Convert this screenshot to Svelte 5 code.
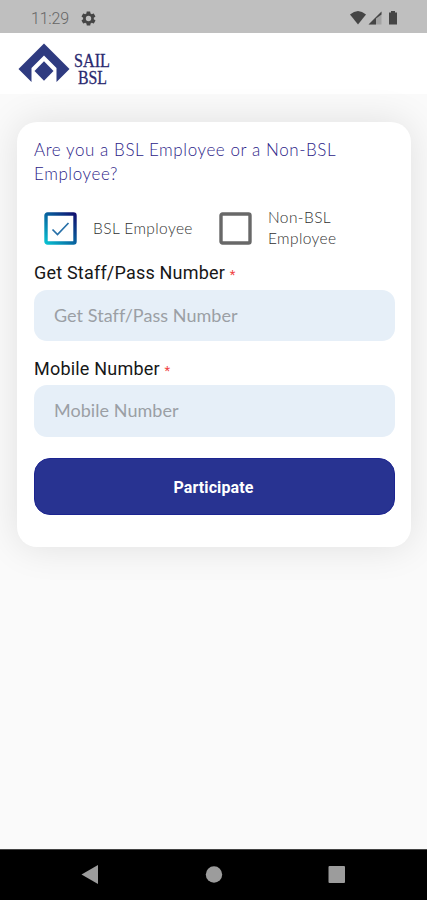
<script lang="ts">
  type Field = { id: string; label: string; value: string };

  let employee = $state(true);

  let fields = $state<Field[]>([
    { id: 'staff', label: 'Get Staff/Pass Number', value: '' },
    { id: 'mobile', label: 'Mobile Number', value: '' }
  ]);
</script>

<div class="screen">
  <div class="status-bar">
    <span class="clock">11:29</span>
    <svg class="gear" viewBox="0 0 24 24" width="17" height="17">
      <path fill="#454545" fill-rule="evenodd" d="M19.4 13c0-.3.1-.6.1-1s0-.7-.1-1l2.1-1.600c.2-.2.3-.5.1-.7l-2-3.400c-.1-.2-.4-.3-.6-.2l-2.500 1c-.5-.4-1.100-.7-1.700-1l-.4-2.600c0-.3-.2-.5-.5-.5h-4c-.3 0-.5.2-.5.5L9.100 5.100c-.6.3-1.200.6-1.700 1l-2.500-1c-.2-.1-.5 0-.6.2l-2 3.400c-.1.2-.1.5.1.7L4.500 11c0 .3-.1.600-.1 1s0 .7.1 1l-2.100 1.600c-.2.2-.3.5-.1.700l2 3.400c.1.2.4.3.6.2l2.500-1c.5.4 1.100.7 1.700 1l.4 2.600c0 .3.2.5.5.5h4c.3 0 .5-.2.5-.5l.4-2.600c.6-.3 1.200-.6 1.700-1l2.500 1c.2.1.5 0 .6-.2l2-3.400c.1-.2.1-.5-.1-.700zM12 15.800a3.800 3.800 0 1 1 0-7.600 3.800 3.800 0 0 1 0 7.600z" />
    </svg>
    <svg class="signals" viewBox="0 0 50 18" width="50" height="18">
      <path fill="#454545" d="M0 5.500Q8-1.500 16 5.500L8 15.500z" />
      <path fill="#a3a3a3" d="M18.500 15.500L31.500 2.500V15.500z" />
      <path fill="#454545" d="M18.500 15.500L31.500 2.500V5.500L26 9.500V15.500z" />
      <path fill="#454545" d="M41 2h4v1.500h2V15.500h-8V3.500H41z" />
    </svg>
  </div>

  <header class="app-bar">
    <svg viewBox="0 0 100 50" width="100" height="50">
      <path fill="#2f3b80" d="M26 .5L51.500 26 38.500 39V25L26 12.500 13.500 25V39L.5 26z" />
      <path fill="#2f3b80" d="M26 18.300L35.500 28 26 37.700 16.500 28z" />
      <text x="56" y="23.500" textLength="36" lengthAdjust="spacingAndGlyphs">SAIL</text>
      <text x="60" y="41" textLength="29" lengthAdjust="spacingAndGlyphs">BSL</text>
    </svg>
  </header>

  <main>
    <section class="card">
      <h1>Are you a BSL Employee or a Non-BSL<br />Employee?</h1>

      <div class="choices">
        <button class="choice first" onclick={() => (employee = true)}>
          {@render box(employee)}
          <span>BSL Employee</span>
        </button>
        <button class="choice" onclick={() => (employee = false)}>
          {@render box(!employee)}
          <span>Non-BSL<br />Employee</span>
        </button>
      </div>

      {#each fields as field (field.id)}
        <div class="field">
          <label for={field.id}>{field.label} <span class="star">*</span></label>
          <input id={field.id} placeholder={field.label} bind:value={field.value} />
        </div>
      {/each}

      <button class="submit">Participate</button>
    </section>
  </main>

  <nav class="nav-bar">
    <svg viewBox="0 0 427 51" width="427" height="51">
      <g fill="#9c9c9c">
        <path d="M81.500 25.500L98 16V35z" />
        <circle cx="214" cy="25.500" r="8.200" />
        <rect x="328.500" y="17" width="16.500" height="17" rx="1" />
      </g>
    </svg>
  </nav>
</div>

{#snippet box(checked: boolean)}
  <svg class="box" viewBox="0 0 33 33" width="33" height="33">
    <defs>
      <linearGradient id="tick" x1="0" y1="1" x2="1" y2="0">
        <stop offset="0" stop-color="#08bfd0" />
        <stop offset=".5" stop-color="#07639f" />
        <stop offset="1" stop-color="#10106f" />
      </linearGradient>
    </defs>
    <rect x="2" y="2" width="29" height="29" rx="1.500" fill="none" stroke={checked ? 'url(#tick)' : '#686868'} stroke-width="3.400" />
    {#if checked}
      <path d="M8.500 17.500L13.500 22.500 24.500 11" fill="none" stroke="#2770a8" stroke-width="1.700" />
    {/if}
  </svg>
{/snippet}

<style>
  :global(body) {
    margin: 0;
    background: #fafafa;
  }

  .screen {
    display: flex;
    flex-direction: column;
    width: 427px;
    height: 900px;
    overflow: hidden;
    background: #fafafa;
    font-family: Roboto, sans-serif;
  }

  .status-bar {
    display: flex;
    align-items: center;
    box-sizing: border-box;
    height: 33px;
    padding: 3px 27px 0 31px;
    background: #bfbfbf;
  }

  .clock {
    width: 49px;
    color: #666;
    font-size: 16px;
    font-weight: 300;
    letter-spacing: -0.2px;
  }

  .signals {
    margin-left: auto;
  }

  .app-bar {
    box-sizing: border-box;
    height: 61px;
    padding: 10px 18px 0;
    background: #fff;
  }

  .app-bar svg {
    display: block;
    overflow: visible;
  }

  .app-bar text {
    fill: #29296f;
    font-family: "Liberation Serif", serif;
    font-size: 18.5px;
    stroke: #29296f;
    stroke-width: 0.3px;
  }

  main {
    flex: 1;
    padding: 28px 16px 0 17px;
  }

  .card {
    box-sizing: border-box;
    height: 425px;
    padding: 16px 17px 0;
    border-radius: 20px;
    background: #fff;
    box-shadow: 0 0 38px rgba(0, 0, 0, 0.11);
  }

  h1 {
    margin: 0;
    color: #2c2388;
    font-family: Lato, sans-serif;
    font-size: 17px;
    font-weight: 300;
    line-height: 24px;
    letter-spacing: 0.58px;
    white-space: nowrap;
  }

  .choices {
    display: flex;
    height: 50px;
    margin-top: 17px;
    padding-left: 10px;
  }

  .choice {
    display: flex;
    align-items: center;
    gap: 16px;
    padding: 0;
    border: 0;
    background: none;
    color: #303030;
    font-family: Lato, sans-serif;
    font-size: 15.5px;
    font-weight: 300;
    line-height: 21px;
    letter-spacing: 0.4px;
    text-align: left;
    white-space: nowrap;
  }

  .first {
    width: 175px;
  }

  .box {
    flex: none;
  }

  .field {
    height: 95.5px;
  }

  label {
    display: block;
    height: 36.5px;
    padding: 9px 0 0;
    box-sizing: border-box;
    color: #171717;
    font-size: 18px;
    line-height: 22px;
    letter-spacing: 0.2px;
  }

  .star {
    color: #f04444;
    font-size: 13px;
  }

  input {
    display: block;
    box-sizing: border-box;
    width: 361px;
    height: 51.5px;
    padding: 0 20px 1px;
    border: 0;
    border-radius: 13px;
    background: #e6eff8;
    font-family: Lato, sans-serif;
    font-size: 18px;
    letter-spacing: 0.05px;
  }

  input::placeholder {
    color: #9b9fa5;
    opacity: 1;
  }

  .submit {
    display: block;
    width: 361px;
    height: 57px;
    margin-top: 14px;
    padding: 1px 2px 0 0;
    border: 1px solid #1c2490;
    border-radius: 16px;
    background: #283391;
    color: #fff;
    font-family: Roboto, sans-serif;
    font-size: 16px;
    font-weight: 700;
    letter-spacing: 0.1px;
  }

  .nav-bar {
    box-sizing: border-box;
    height: 51px;
    border-top: 1px solid #444;
    background: #000;
  }

  .nav-bar svg {
    display: block;
    margin-top: -1px;
  }
</style>
